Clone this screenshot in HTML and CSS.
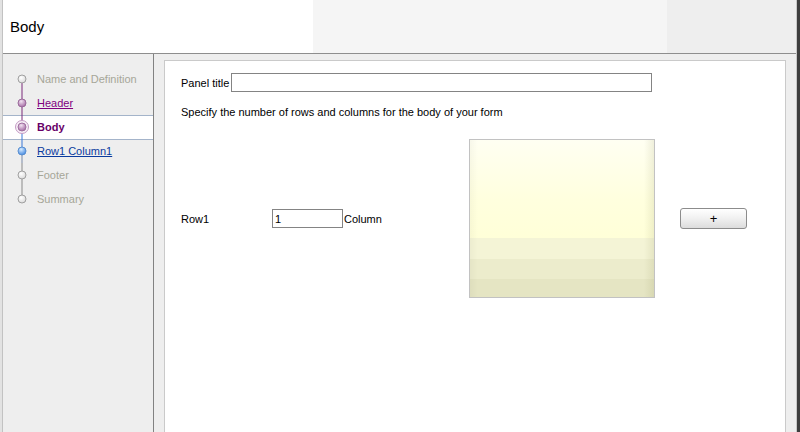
FILE: index.html
```html
<!DOCTYPE html>
<html lang="en">
<head>
  <meta charset="UTF-8">
  <title>Body</title>
  <link rel="stylesheet" href="styles.css">
</head>
<body>
  <div class="window">
    <div class="frame">
      <div class="header">
        <div class="header-title">Body</div>
        <div class="header-mid"></div>
        <div class="header-end"></div>
      </div>

      <div class="main">
        <div class="nav">
          <div class="step done-plain">
            <svg class="marker" width="34" height="24" viewBox="0 0 34 24">
              <line x1="19" y1="12" x2="19" y2="24" stroke="#7a2a7a" stroke-width="1"/>
              <circle cx="19" cy="12" r="4" fill="url(#gGray)" stroke="#a0a0a0"/>
            </svg>
            <span class="label muted">Name and Definition</span>
          </div>
          <div class="step">
            <svg class="marker" width="34" height="24" viewBox="0 0 34 24">
              <line x1="19" y1="0" x2="19" y2="24" stroke="#7a2a7a" stroke-width="1"/>
              <circle cx="19" cy="12" r="4" fill="url(#gPurple)" stroke="#9a6a9a"/>
            </svg>
            <a class="label visited">Header</a>
          </div>
          <div class="step current">
            <svg class="marker" width="34" height="24" viewBox="0 0 34 24">
              <line x1="19" y1="0" x2="19" y2="12" stroke="#7a2a7a" stroke-width="1"/>
              <line x1="19" y1="12" x2="19" y2="24" stroke="#3a78d8" stroke-width="1"/>
              <circle cx="19" cy="12" r="6.5" fill="#f6eef6" stroke="#c49ac4"/>
              <circle cx="19" cy="12" r="4" fill="url(#gPurple)" stroke="#a070a0"/>
            </svg>
            <span class="label">Body</span>
          </div>
          <div class="step">
            <svg class="marker" width="34" height="24" viewBox="0 0 34 24">
              <line x1="19" y1="0" x2="19" y2="12" stroke="#3a78d8" stroke-width="1"/>
              <line x1="19" y1="12" x2="19" y2="24" stroke="#7a8aa8" stroke-width="1"/>
              <circle cx="19" cy="12" r="4" fill="url(#gBlue)" stroke="#5a8fd0"/>
            </svg>
            <a class="label link">Row1 Column1</a>
          </div>
          <div class="step">
            <svg class="marker" width="34" height="24" viewBox="0 0 34 24">
              <line x1="19" y1="0" x2="19" y2="24" stroke="#8a8a8a" stroke-width="1"/>
              <circle cx="19" cy="12" r="4" fill="url(#gGray)" stroke="#a0a0a0"/>
            </svg>
            <span class="label muted">Footer</span>
          </div>
          <div class="step">
            <svg class="marker" width="34" height="24" viewBox="0 0 34 24">
              <line x1="19" y1="0" x2="19" y2="12" stroke="#8a8a8a" stroke-width="1"/>
              <circle cx="19" cy="12" r="4" fill="url(#gGray)" stroke="#a0a0a0"/>
            </svg>
            <span class="label muted">Summary</span>
          </div>

          <!-- shared gradients for the step bullets -->
          <svg width="0" height="0" class="defs">
            <defs>
              <radialGradient id="gGray" cx="40%" cy="35%" r="70%">
                <stop offset="0" stop-color="#ffffff"/>
                <stop offset="1" stop-color="#d8d8d8"/>
              </radialGradient>
              <radialGradient id="gPurple" cx="40%" cy="30%" r="75%">
                <stop offset="0" stop-color="#f2e2f2"/>
                <stop offset="1" stop-color="#a064a0"/>
              </radialGradient>
              <radialGradient id="gBlue" cx="40%" cy="30%" r="75%">
                <stop offset="0" stop-color="#d8ecff"/>
                <stop offset="1" stop-color="#3c84e0"/>
              </radialGradient>
            </defs>
          </svg>
        </div>

        <div class="content">
          <div class="panel">
            <div class="title-row">
              <label for="panelTitle">Panel title</label>
              <input type="text" id="panelTitle" class="title-input">
            </div>

            <p class="hint">Specify the number of rows and columns for the body of your form</p>

            <div class="grid-row">
              <span class="row-label">Row1</span>
              <input type="text" class="cols-input" value="1">
              <span class="col-label">Column</span>
              <div class="preview"></div>
              <button class="add-btn">+</button>
            </div>
          </div>
        </div>
      </div>
    </div>
  </div>
</body>
</html>
```

FILE: styles.css
```css
* {
  margin: 0;
  padding: 0;
  box-sizing: border-box;
}

body {
  font-family: 'Liberation Sans', Arial, sans-serif;
  font-size: 11px;
  color: #000;
  background: #eeeeee;
  width: 800px;
  height: 432px;
  overflow: hidden;
}

.window {
  width: 800px;
  height: 432px;
  border-left: 2px solid #e2e2e2;
  border-right: 3px solid #3e3e3e;
}

.frame {
  height: 100%;
  display: flex;
  flex-direction: column;
  border-left: 1px solid #c2c2c2;
  border-right: 1px solid #c8c8c8;
}

/* top banner */
.header {
  height: 54px;
  flex-shrink: 0;
  display: flex;
  border-bottom: 1px solid #8e8e8e;
}

.header-title {
  width: 310px;
  background: #ffffff;
  padding: 18px 0 0 7px;
  font-size: 15px;
  line-height: 18px;
}

.header-mid {
  width: 354px;
  background: #f5f5f5;
}

.header-end {
  flex: 1;
  background: #eeeeee;
}

.main {
  flex: 1;
  display: flex;
  min-height: 0;
}

/* step list on the left */
.nav {
  width: 151px;
  flex-shrink: 0;
  background: #eeeeee;
  border-right: 1px solid #828282;
  padding-top: 13px;
}

.step {
  height: 24px;
  display: flex;
  align-items: center;
}

.step.current {
  background: #ffffff;
  box-shadow: inset 0 1px 0 #a4b4ca, 0 1px 0 #a4b4ca;
}

.marker {
  display: block;
  flex-shrink: 0;
}

.defs {
  position: absolute;
}

.label {
  line-height: 14px;
}

.muted {
  color: #a6a698;
}

.visited {
  color: #800080;
  text-decoration: underline;
}

.current .label {
  color: #680068;
  font-weight: bold;
}

.link {
  color: #0a3a9e;
  text-decoration: underline;
}

/* form area */
.content {
  flex: 1;
  background: #eeeeee;
  padding: 6px 10px 0 10px;
}

.panel {
  height: 100%;
  background: #ffffff;
  border: 1px solid #cacaca;
  border-bottom: none;
  padding: 12px 0 0 16px;
}

.title-row {
  display: flex;
  align-items: center;
  gap: 2px;
}

input {
  font-family: inherit;
  font-size: 11px;
  height: 19px;
  border: 1px solid #848484;
  padding: 0 2px;
  outline: none;
  background: #fff;
}

.title-input {
  width: 421px;
}

.hint {
  margin-top: 13px;
  line-height: 14px;
}

.grid-row {
  display: flex;
  align-items: center;
  margin-top: 20px;
}

.row-label {
  width: 91px;
}

.cols-input {
  width: 71px;
}

.col-label {
  width: 126px;
  padding-left: 1px;
}

.preview {
  width: 186px;
  height: 159px;
  border: 1px solid #c2c2c2;
  background:
    linear-gradient(90deg, rgba(0, 0, 0, 0.03) 0, rgba(0, 0, 0, 0) 8px, rgba(0, 0, 0, 0) 174px, rgba(120, 120, 60, 0.12) 184px),
    linear-gradient(180deg, #fffff2 0, #ffffde 60px, #ffffd8 98px, #f4f4d6 98px, #f4f4d6 119px, #ececcc 119px, #ececcc 139px, #e5e5c3 139px);
}

.add-btn {
  width: 67px;
  height: 21px;
  margin-left: 25px;
  font-family: inherit;
  font-size: 13px;
  line-height: 17px;
  border: 1px solid #8c8c8c;
  border-radius: 3px;
  background: linear-gradient(180deg, #ffffff 0%, #f0f0f0 50%, #dcdcdc 100%);
  color: #000;
}
```
